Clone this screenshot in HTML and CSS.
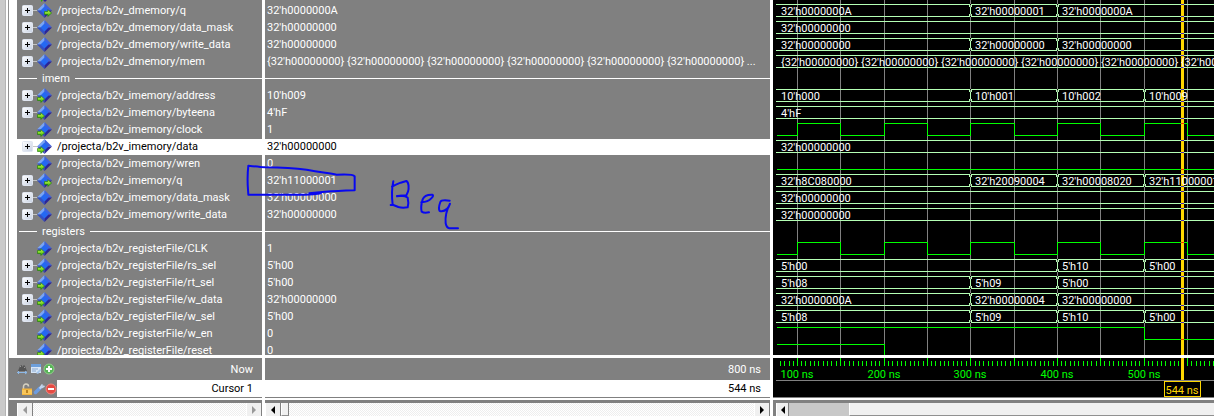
FILE: index.html
```html
<!DOCTYPE html>
<html lang="en">
<head>
<meta charset="utf-8">
<title>Wave</title>
<link rel="stylesheet" href="styles.css">
</head>
<body>
<svg class="defs" aria-hidden="true">
  <linearGradient id="face" x1="0" y1="0" x2="1" y2="1"><stop offset="0" stop-color="#fff"/><stop offset="1" stop-color="#c6d0e2"/></linearGradient>
  <linearGradient id="leaf" x1="0" y1="0" x2="0" y2="1"><stop offset="0" stop-color="#d8ff50"/><stop offset="1" stop-color="#2cae00"/></linearGradient>
  <symbol id="plus" viewBox="0 0 11 11"><rect x=".5" y=".5" width="10" height="10" rx="1" fill="url(#face)" stroke="#dfe5f0"/><path d="M3 5.500h5M5.500 3v5" stroke="#000"/></symbol>
  <symbol id="gem" viewBox="0 0 15 15"><path d="M7.500 0 0 7.500h7.500z" fill="#79a5f6"/><path d="M7.500 0 15 7.500H7.500z" fill="#3c62df"/><path d="M0 7.500 7.500 15V7.500z" fill="#3450c4"/><path d="M15 7.500 7.500 15V7.500z" fill="#2b2597"/><path d="m7.500 3.500 4 4-4 4-4-4z" fill="#2468f2"/></symbol>
  <symbol id="arrow" viewBox="0 0 8 8"><path d="M.5 2.500h3.300V.700L7.600 4 3.800 7.400V5.500H.5z" fill="url(#leaf)" stroke="#187a00" stroke-width=".6"/></symbol>
  <symbol id="net" viewBox="0 0 15 15"><use href="#gem"/></symbol>
  <symbol id="in" viewBox="0 0 15 15"><use href="#gem"/><use href="#arrow" x="0" y="7" width="8" height="8"/></symbol>
  <symbol id="out" viewBox="0 0 15 15"><use href="#gem"/><use href="#arrow" x="7" y="6" width="8" height="8"/></symbol>
</svg>

<main class="window">
  <section class="column names">
    <div class="pane signals">
      <div class="cut"><svg viewBox="0 0 15 2"><path d="M4 0h2L4 2z" fill="#2cae00"/><path d="M6 0h4L8 2z" fill="#2b2597"/></svg></div>
      <div class="row"><button class="expand" aria-label="Expand"><svg><use href="#plus"/></svg></button><svg class="icon"><use href="#out"/></svg><span>/projecta/b2v_dmemory/q</span></div>
      <div class="row"><button class="expand" aria-label="Expand"><svg><use href="#plus"/></svg></button><svg class="icon"><use href="#net"/></svg><span>/projecta/b2v_dmemory/data_mask</span></div>
      <div class="row"><button class="expand" aria-label="Expand"><svg><use href="#plus"/></svg></button><svg class="icon"><use href="#net"/></svg><span>/projecta/b2v_dmemory/write_data</span></div>
      <div class="row"><button class="expand" aria-label="Expand"><svg><use href="#plus"/></svg></button><svg class="icon"><use href="#net"/></svg><span>/projecta/b2v_dmemory/mem</span></div>
      <div class="divider"><span>imem</span></div>
      <div class="row"><button class="expand" aria-label="Expand"><svg><use href="#plus"/></svg></button><svg class="icon"><use href="#in"/></svg><span>/projecta/b2v_imemory/address</span></div>
      <div class="row"><button class="expand" aria-label="Expand"><svg><use href="#plus"/></svg></button><svg class="icon"><use href="#in"/></svg><span>/projecta/b2v_imemory/byteena</span></div>
      <div class="row leaf"><svg class="icon"><use href="#in"/></svg><span>/projecta/b2v_imemory/clock</span></div>
      <div class="row selected"><button class="expand" aria-label="Expand"><svg><use href="#plus"/></svg></button><svg class="icon"><use href="#in"/></svg><span>/projecta/b2v_imemory/data</span></div>
      <div class="row leaf"><svg class="icon"><use href="#in"/></svg><span>/projecta/b2v_imemory/wren</span></div>
      <div class="row"><button class="expand" aria-label="Expand"><svg><use href="#plus"/></svg></button><svg class="icon"><use href="#out"/></svg><span>/projecta/b2v_imemory/q</span></div>
      <div class="row"><button class="expand" aria-label="Expand"><svg><use href="#plus"/></svg></button><svg class="icon"><use href="#net"/></svg><span>/projecta/b2v_imemory/data_mask</span></div>
      <div class="row"><button class="expand" aria-label="Expand"><svg><use href="#plus"/></svg></button><svg class="icon"><use href="#net"/></svg><span>/projecta/b2v_imemory/write_data</span></div>
      <div class="divider"><span>registers</span></div>
      <div class="row leaf"><svg class="icon"><use href="#in"/></svg><span>/projecta/b2v_registerFile/CLK</span></div>
      <div class="row"><button class="expand" aria-label="Expand"><svg><use href="#plus"/></svg></button><svg class="icon"><use href="#in"/></svg><span>/projecta/b2v_registerFile/rs_sel</span></div>
      <div class="row"><button class="expand" aria-label="Expand"><svg><use href="#plus"/></svg></button><svg class="icon"><use href="#in"/></svg><span>/projecta/b2v_registerFile/rt_sel</span></div>
      <div class="row"><button class="expand" aria-label="Expand"><svg><use href="#plus"/></svg></button><svg class="icon"><use href="#in"/></svg><span>/projecta/b2v_registerFile/w_data</span></div>
      <div class="row"><button class="expand" aria-label="Expand"><svg><use href="#plus"/></svg></button><svg class="icon"><use href="#in"/></svg><span>/projecta/b2v_registerFile/w_sel</span></div>
      <div class="row leaf"><svg class="icon"><use href="#in"/></svg><span>/projecta/b2v_registerFile/w_en</span></div>
      <div class="row leaf"><svg class="icon"><use href="#in"/></svg><span>/projecta/b2v_registerFile/reset</span></div>
    </div>
    <div class="times">
      <div class="now">
        <div class="tools">
          <button aria-label="Find"><svg viewBox="0 0 12 12"><path d="M1 8 3 3l2-1v2l2-2 1 1 2 5z" fill="#555"/><path d="M3 4l1-1M7 4l1 1" stroke="#999"/><path d="M0 9.500h10M2 8 .5 9.500 2 11M8 8l2 1.500L8 11" fill="none" stroke="#8db8e6"/></svg></button>
          <button aria-label="Timeline settings"><svg viewBox="0 0 12 12"><path d="M1 1h10v9H1z" fill="#d7e6f7"/><path d="M1 1h10v3H1z" fill="#6d9fdb"/><path d="M2 6h6M2 8h4" stroke="#8aa9cf"/><path d="m6 10 4-4 1.500 1L8 11z" fill="#a9c9ee"/></svg></button>
          <button aria-label="Insert cursor"><svg viewBox="0 0 12 12"><circle cx="6" cy="6" r="5" fill="#58b458" stroke="#92ce8b"/><path d="M6 3v6M3 6h6" stroke="#fff" stroke-width="2"/></svg></button>
        </div>
        <span>Now</span>
      </div>
      <div class="cursor">
        <div class="tools">
          <button aria-label="Lock cursor"><svg viewBox="0 0 12 12"><path d="M2.500 6V3.500a2.500 2.500 0 0 1 5 0" fill="none" stroke="#d5d0c0" stroke-width="1.500"/><path d="M1 5.500h10V12H1z" fill="#f2b43c"/><path d="M1 8h10M1 10h10" stroke="#ffd878"/><path d="M6 7v3" stroke="#a66c10" stroke-width="1.500"/></svg></button>
          <button aria-label="Edit cursor"><svg viewBox="0 0 12 12"><path d="M7 5 2.500 9.500" stroke="#6c9ce2" stroke-width="3.500" stroke-linecap="round"/><path d="M9.500 1.500 8 3.500l1 1 2.500-1.500" fill="none" stroke="#c2d5ec" stroke-width="1.700"/><path d="M6.500 5.500 9 3.500" stroke="#c2d5ec" stroke-width="2"/></svg></button>
          <button aria-label="Delete cursor"><svg viewBox="0 0 12 12"><circle cx="6" cy="6" r="5" fill="#e64b43" stroke="#ef8880"/><path d="M3 6h6" stroke="#fff" stroke-width="2"/></svg></button>
        </div>
        <span>Cursor 1</span>
      </div>
    </div>
    <div class="scroll inset idle"><button aria-label="Scroll left"><svg viewBox="0 0 10 10"><path d="M7 1v8L3 5z"/></svg></button><div class="track"></div><button aria-label="Scroll right"><svg viewBox="0 0 10 10"><path d="M3 1v8l4-4z"/></svg></button></div>
  </section>

  <section class="column values">
    <div class="pane signals">
      <div class="cut"></div>
      <div class="row">32'h0000000A</div>
      <div class="row">32'h00000000</div>
      <div class="row">32'h00000000</div>
      <div class="row">{32'h00000000} {32'h00000000} {32'h00000000} {32'h00000000} {32'h00000000} {32'h00000000} ...</div>
      <div class="divider"></div>
      <div class="row">10'h009</div>
      <div class="row">4'hF</div>
      <div class="row">1</div>
      <div class="row selected">32'h00000000</div>
      <div class="row">0</div>
      <div class="row">32'h11000001</div>
      <div class="row">32'h00000000</div>
      <div class="row">32'h00000000</div>
      <div class="divider"></div>
      <div class="row">1</div>
      <div class="row">5'h00</div>
      <div class="row">5'h00</div>
      <div class="row">32'h00000000</div>
      <div class="row">5'h00</div>
      <div class="row">0</div>
      <div class="row">0</div>
    </div>
    <div class="times">
      <div class="now"><span>800 ns</span></div>
      <div class="cursor"><span>544 ns</span></div>
    </div>
    <div class="scroll"><button aria-label="Scroll left"><svg viewBox="0 0 10 10"><path d="M7 1v8L3 5z"/></svg></button><div class="thumb short"></div><div class="track"></div><button aria-label="Scroll right"><svg viewBox="0 0 10 10"><path d="M3 1v8l4-4z"/></svg></button></div>
  </section>

  <section class="column waves">
    <div class="pane">
      <svg class="plot" width="2000" height="359">
        <defs>
          <g id="bus"><path d="M3 4.500H2000M3 16.500H2000"/></g>
          <g id="edge"><path class="gap" d="M-1 4.500h3M-1 16.500h3"/><path d="M.5 7v7M-.5 4v3M1.500 4v3M-.5 14v3M1.500 14v3"/></g>
          <path id="clk" d="M4 16.500H24.500V4.500H67.500V16.500H111.500V4.500H154.500V16.500H197.500V4.500H241.500V16.500H284.500V4.500H327.500V16.500H371.500V4.500H414.500V16.500H2000"/>
        </defs>
        <path class="grid" d="M24.500 0V359M67.500 0V359M111.500 0V359M154.500 0V359M197.500 0V359M241.500 0V359M284.500 0V359M327.500 0V359M371.500 0V359M414.500 0V359"/>
        <g class="bus">
          <use href="#bus"/><use href="#edge" x="197"/><use href="#edge" x="284"/>
          <use href="#bus" y="17"/>
          <use href="#bus" y="34"/><use href="#edge" x="197" y="34"/><use href="#edge" x="284" y="34"/>
          <use href="#bus" y="51"/>
          <use href="#bus" y="85"/><use href="#edge" x="197" y="85"/><use href="#edge" x="284" y="85"/><use href="#edge" x="371" y="85"/>
          <use href="#bus" y="102"/>
          <use href="#bus" y="136"/>
          <use href="#bus" y="170"/><use href="#edge" x="197" y="170"/><use href="#edge" x="284" y="170"/><use href="#edge" x="371" y="170"/>
          <use href="#bus" y="187"/>
          <use href="#bus" y="204"/>
          <use href="#bus" y="255"/><use href="#edge" x="284" y="255"/><use href="#edge" x="371" y="255"/>
          <use href="#bus" y="272"/><use href="#edge" x="197" y="272"/><use href="#edge" x="284" y="272"/>
          <use href="#bus" y="289"/><use href="#edge" x="197" y="289"/><use href="#edge" x="284" y="289"/>
          <use href="#bus" y="306"/><use href="#edge" x="197" y="306"/><use href="#edge" x="284" y="306"/><use href="#edge" x="371" y="306"/>
        </g>
        <g class="bit">
          <use href="#clk" y="119"/>
          <path d="M4 169.500H2000"/>
          <use href="#clk" y="238"/>
          <path d="M4 327.500H371.500V339.500H2000"/>
          <path d="M4 344.500H111.500V359"/>
        </g>
        <path class="marker" d="M409.500 0V359"/>
        <path class="crossing" d="M408 4.500h3M408 16.500h3M408 21.500h3M408 33.500h3M408 38.500h3M408 50.500h3M408 55.500h3M408 67.500h3M408 89.500h3M408 101.500h3M408 106.500h3M408 118.500h3M408 140.500h3M408 152.500h3M408 174.500h3M408 186.500h3M408 191.500h3M408 203.500h3M408 208.500h3M408 220.500h3M408 259.500h3M408 271.500h3M408 276.500h3M408 288.500h3M408 293.500h3M408 305.500h3M408 310.500h3M408 322.500h3"/>
        <path class="bit-crossing" d="M408 123.500h3M408 169.500h3M408 242.500h3M408 339.500h3"/>
        <g class="label">
          <text x="8" y="15">32'h0000000A</text><text x="202" y="15">32'h00000001</text><text x="289" y="15">32'h0000000A</text>
          <text x="8" y="32">32'h00000000</text>
          <text x="8" y="49">32'h00000000</text><text x="202" y="49">32'h00000000</text><text x="289" y="49">32'h00000000</text>
          <text x="8" y="66">{32'h00000000} {32'h00000000} {32'h00000000} {32'h00000000} {32'h00000000} {32'h00000000}</text>
          <text x="8" y="100">10'h000</text><text x="202" y="100">10'h001</text><text x="289" y="100">10'h002</text><text x="376" y="100">10'h009</text>
          <text x="8" y="117">4'hF</text>
          <text x="8" y="151">32'h00000000</text>
          <text x="8" y="185">32'h8C080000</text><text x="202" y="185">32'h20090004</text><text x="289" y="185">32'h00008020</text><text x="376" y="185">32'h11000001</text>
          <text x="8" y="202">32'h00000000</text>
          <text x="8" y="219">32'h00000000</text>
          <text x="8" y="270">5'h00</text><text x="289" y="270">5'h10</text><text x="376" y="270">5'h00</text>
          <text x="8" y="287">5'h08</text><text x="202" y="287">5'h09</text><text x="289" y="287">5'h00</text>
          <text x="8" y="304">32'h0000000A</text><text x="202" y="304">32'h00000004</text><text x="289" y="304">32'h00000000</text>
          <text x="8" y="321">5'h08</text><text x="202" y="321">5'h09</text><text x="289" y="321">5'h10</text><text x="376" y="321">5'h00</text>
        </g>
      </svg>
    </div>
    <div class="times">
      <svg class="plot" width="2000" height="39">
        <defs>
          <pattern id="ticks" x="24" y="0" width="433" height="8" patternUnits="userSpaceOnUse">
            <path d="M.5 0v8M4.500 3v5M8.500 3v5M13.500 3v5M17.500 3v5M21.500 3v5M26.500 3v5M30.500 3v5M34.500 3v5M39.500 3v5M43.500 0v8M47.500 3v5M52.500 3v5M56.500 3v5M61.500 3v5M65.500 3v5M69.500 3v5M74.500 3v5M78.500 3v5M82.500 3v5M87.500 0v8M91.500 3v5M95.500 3v5M100.500 3v5M104.500 3v5M108.500 3v5M113.500 3v5M117.500 3v5M121.500 3v5M126.500 3v5M130.500 0v8M134.500 3v5M138.500 3v5M143.500 3v5M147.500 3v5M151.500 3v5M156.500 3v5M160.500 3v5M164.500 3v5M169.500 3v5M173.500 0v8M178.500 3v5M182.500 3v5M186.500 3v5M191.500 3v5M195.500 3v5M200.500 3v5M204.500 3v5M208.500 3v5M213.500 3v5M217.500 0v8M221.500 3v5M225.500 3v5M230.500 3v5M234.500 3v5M238.500 3v5M243.500 3v5M247.500 3v5M251.500 3v5M256.500 3v5M260.500 0v8M264.500 3v5M268.500 3v5M273.500 3v5M277.500 3v5M281.500 3v5M286.500 3v5M290.500 3v5M294.500 3v5M299.500 3v5M303.500 0v8M307.500 3v5M312.500 3v5M316.500 3v5M321.500 3v5M325.500 3v5M329.500 3v5M334.500 3v5M338.500 3v5M342.500 3v5M347.500 0v8M351.500 3v5M355.500 3v5M360.500 3v5M364.500 3v5M368.500 3v5M373.500 3v5M377.500 3v5M381.500 3v5M386.500 3v5M390.500 0v8M394.500 3v5M399.500 3v5M403.500 3v5M407.500 3v5M412.500 3v5M416.500 3v5M420.500 3v5M425.500 3v5M429.500 3v5" stroke="#0f0"/>
          </pattern>
        </defs>
        <rect x="4" width="1996" height="8" fill="url(#ticks)"/>
        <path class="grid" d="M3 22.500H2000"/>
        <path class="marker" d="M409.500 0V22"/>
        <g class="scale"><text x="24" y="20">100 ns</text><text x="111" y="20">200 ns</text><text x="197" y="20">300 ns</text><text x="284" y="20">400 ns</text><text x="371" y="20">500 ns</text></g>
        <rect class="tag" x="391.500" y="23.500" width="36" height="15"/>
        <text class="tag-label" x="409" y="36">544 ns</text>
      </svg>
    </div>
    <div class="scroll"><button aria-label="Scroll left"><svg viewBox="0 0 10 10"><path d="M7 1v8L3 5z"/></svg></button><div class="trough"></div><div class="thumb"></div></div>
  </section>

  <svg class="ink" viewBox="0 0 900 390" role="img" aria-label="Handwritten note: Beq">
    <path d="M25 209C24 190 20 165 25 122Q60 126 75 127Q150 128 200 134C240 142 265 144 290 149C325 147 340 148 344 154V196Q290 198 255 200Q230 202 208 205M25 209H180Q220 210 243 205"/>
    <path d="M460 169Q453 200 458 240M456 185Q470 177 482 173L499 168C507 172 507 190 504 200L499 211 471 214M471 213Q495 210 503 218Q507 235 503 247Q487 250 475 246L460 240 452 240"/>
    <path d="M544 232Q565 230 573 221Q583 211 577 209Q554 208 548 223Q541 245 545 260Q552 265 567 262"/>
    <path d="M629 227Q604 223 601 231Q594 250 599 258Q622 262 630 236Q614 265 617 295Q620 309 628 310H654"/>
  </svg>
</main>
</body>
</html>
```

FILE: styles.css
```css
* { box-sizing: border-box; }

body {
  margin: 0;
  background: #cacaca;
  color: #fff;
  font: 11px/17px Roboto, "DejaVu Sans Condensed", sans-serif;
}

button {
  padding: 0;
  border: 0;
  background: none;
  display: flex;
  align-items: center;
  justify-content: center;
}

svg { display: block; flex: none; }

.defs { position: absolute; width: 0; height: 0; }

.window {
  position: relative;
  display: grid;
  grid-template-columns: 253px minmax(0, 508fr) minmax(0, 444fr);
  grid-template-rows: minmax(0, 1fr);
  height: 100vh;
  margin-left: 5px;
  border-left: 1px solid #b4b4b4;
  box-shadow: inset 2px 0 #fff, inset 3px 0 #909090;
  padding-left: 3px;
  overflow: hidden;
}

.column {
  display: grid;
  grid-template-rows: minmax(0, 1fr) 42px 19px;
  min-width: 0;
  background: #808080;
}

.values, .waves { border-left: 3px solid #fff; }

.pane { overflow: hidden; }
.names .pane { border-left: 8px solid #fff; }

.cut { height: 2px; padding-left: 20px; }
.cut svg { width: 15px; height: 2px; }

.row {
  display: flex;
  align-items: center;
  height: 17px;
  padding-left: 5px;
  white-space: nowrap;
}

.row.leaf { padding-left: 20px; }
.row.selected { background: linear-gradient(#808080 1px, #fff 1px); color: #000; }

.expand::after { content: ""; width: 4px; height: 1px; background: #c4c4c4; }
.expand svg { width: 11px; height: 11px; }
.icon { width: 15px; height: 15px; margin-right: 5px; }
.values .row { padding-left: 2px; }

.divider {
  display: flex;
  align-items: center;
  gap: 5px;
  height: 17px;
  padding-left: 2px;
}

.divider::after { content: ""; flex: 1; height: 1px; background: #fff; }
.names .divider::before { content: ""; width: 18px; height: 1px; background: #fff; }
.values .divider { padding-left: 0; }

.times { border-top: 3px solid #fff; }

.now, .cursor {
  display: flex;
  align-items: center;
  justify-content: flex-end;
  padding-right: 9px;
}

.now { height: 22px; }
.cursor { height: 17px; background: #fff; color: #000; }
.tools { display: flex; gap: 1px; margin-right: auto; padding-left: 8px; }
.tools svg { width: 12px; height: 12px; }
.cursor .tools { align-self: stretch; gap: 0; padding-left: 12px; background: #808080; }

.scroll {
  display: flex;
  border-top: 1px solid #808080;
  box-shadow: inset 0 2px #fff, inset 0 4px #808080;
  padding-top: 5px;
}

.scroll.inset { padding-left: 8px; }
.scroll button { width: 16px; background: #f0f0f0; border-right: 1px solid #808080; border-left: 1px solid #fff; }
.scroll button svg { width: 10px; height: 10px; fill: #000; }
.scroll.idle button svg { fill: #999; }
.track { flex: 1; background: repeating-conic-gradient(#fff 0 25%, #eee 0 50%) 0 0 / 2px 2px; }
.thumb { flex: 1; background: #f0f0f0; border-left: 1px solid #fff; border-bottom: 1px solid #909090; }
.thumb.short { flex: 0 0 8px; border-right: 1px solid #808080; }
.trough { width: 60px; background: #c8c8c8; }

.waves .pane, .waves .times { background: #000; }
.waves .times { overflow: hidden; }
.waves .scroll { padding-left: 3px; }
.waves .scroll button { width: 13px; }

.plot path, .plot use { fill: none; shape-rendering: crispEdges; }
.grid { stroke: #808080; }
.bus { stroke: #b4ffb4; }
.gap { stroke: #000; }
.bit { stroke: #0f0; }
.marker { stroke: #ffd700; stroke-width: 3px; }
.crossing { stroke: #4b28b4; }
.bit-crossing { stroke: #ff2800; }
.label { fill: #fff; }
.scale { fill: #0f0; text-anchor: middle; }
.tag { fill: #000; stroke: #ffd700; }
.tag-label { fill: #ffd700; text-anchor: middle; }

/* freehand note drawn over the panes */
.ink {
  position: absolute;
  left: 234px;
  top: 125px;
  width: 300px;
  height: 130px;
  fill: none;
  stroke: #0808f0;
  stroke-width: 6px;
  stroke-linecap: round;
  stroke-linejoin: round;
  pointer-events: none;
}
```
